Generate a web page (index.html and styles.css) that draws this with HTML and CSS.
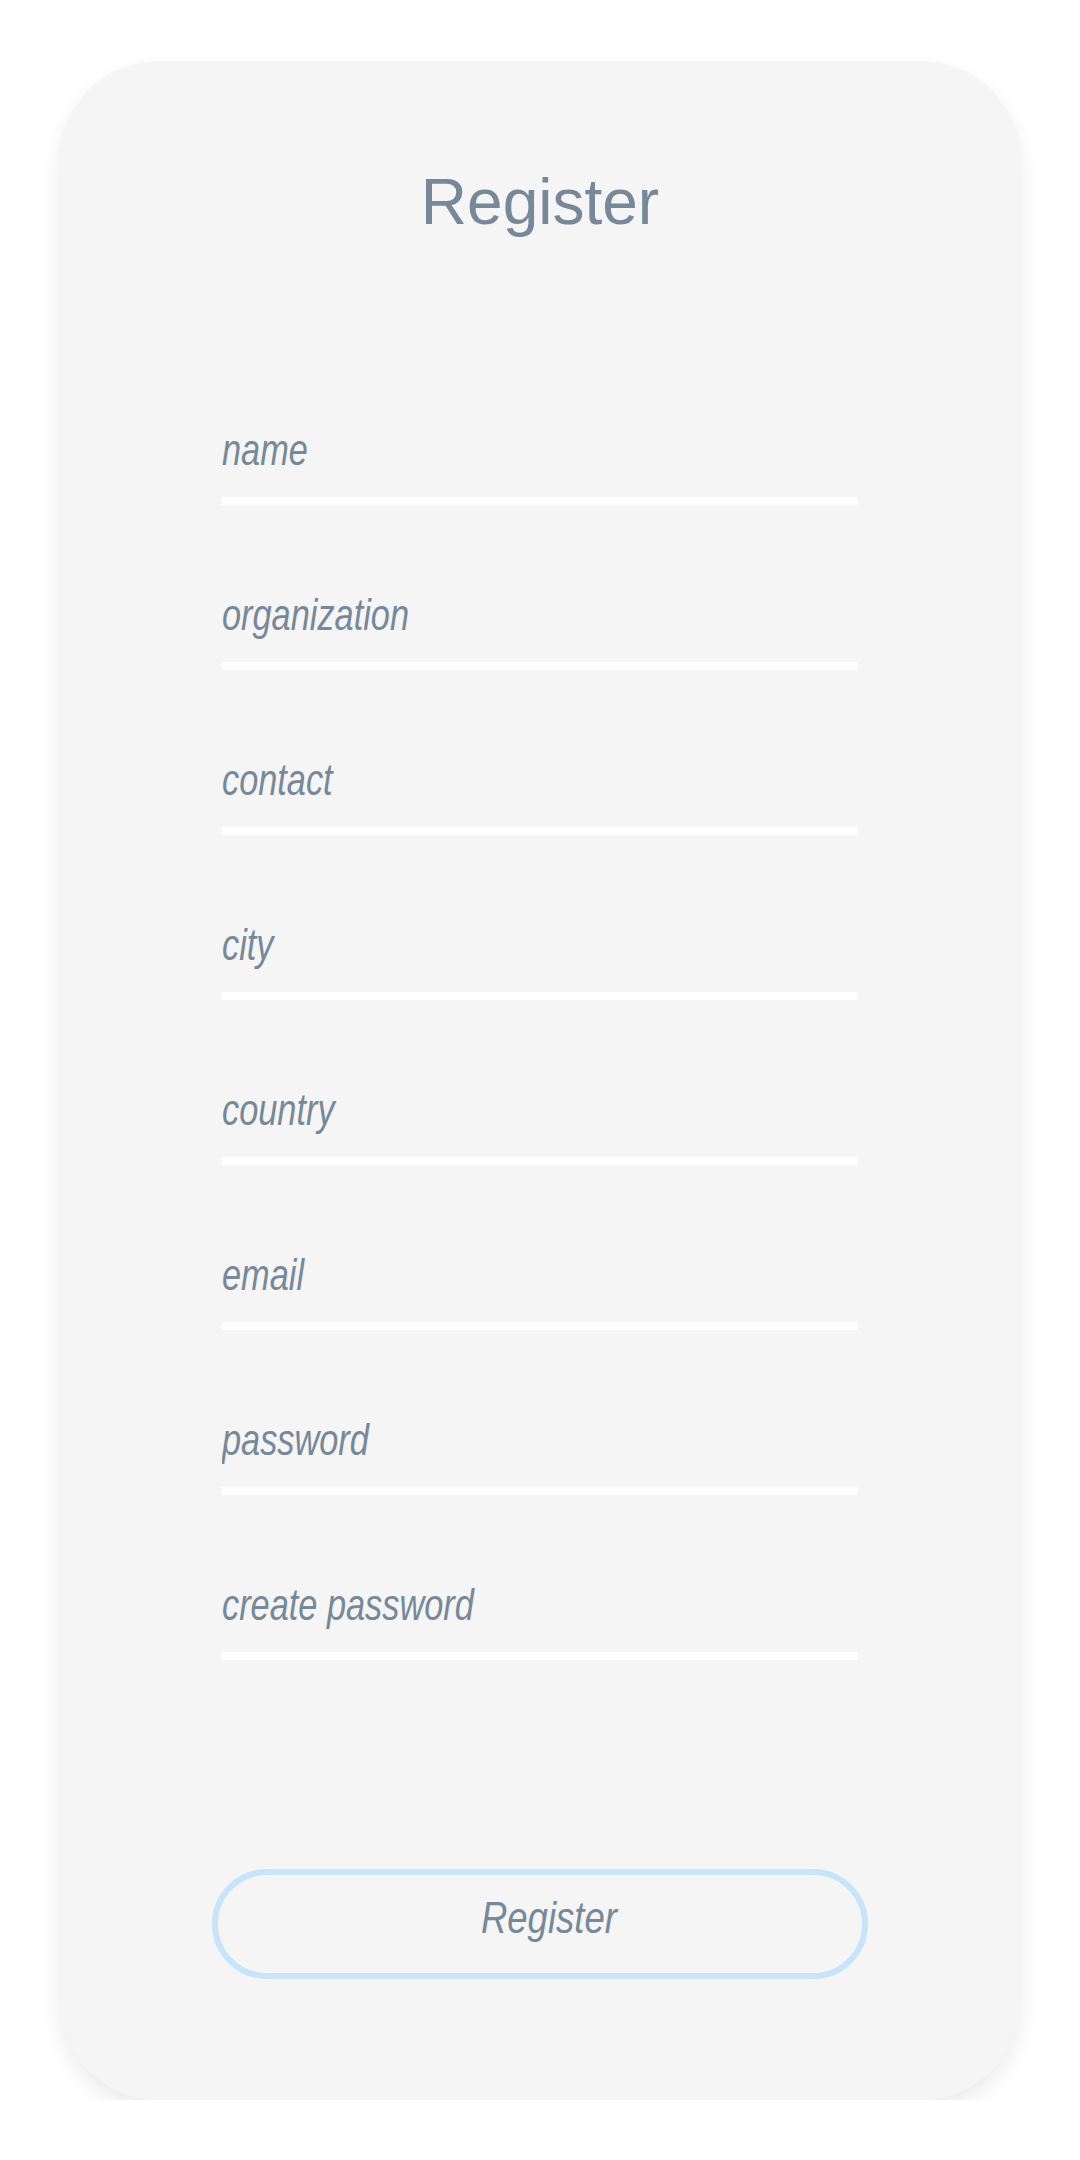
FILE: index.html
```html
<!DOCTYPE html>
<html lang="en">
<head>
<meta charset="utf-8">
<title>Register</title>
<link rel="stylesheet" href="styles.css">
</head>
<body>
<div class="card">
  <h1 class="title">Register</h1>
  <form class="form">
    <div class="fields">
      <input class="field" type="text" placeholder="name">
      <input class="field" type="text" placeholder="organization">
      <input class="field" type="text" placeholder="contact">
      <input class="field" type="text" placeholder="city">
      <input class="field" type="text" placeholder="country">
      <input class="field" type="email" placeholder="email">
      <input class="field" type="password" placeholder="password">
      <input class="field" type="password" placeholder="create password">
    </div>
    <button class="submit" type="button"><span class="submit-label">Register</span></button>
  </form>
</div>
</body>
</html>
```

FILE: styles.css
```css
html, body {
  margin: 0;
  padding: 0;
  background: #ffffff;
}

body {
  padding-top: 61px;
  font-family: "Liberation Sans", Arial, sans-serif;
}

.card {
  box-sizing: border-box;
  width: 962px;
  margin: 0 auto;
  padding: 105px 0 121px;
  background: #f5f5f5;
  border-radius: 100px;
  box-shadow: 0 10px 20px rgba(0, 0, 0, 0.08);
  display: flex;
  flex-direction: column;
  align-items: center;
}

.title {
  margin: 0;
  font-family: "Liberation Sans", Arial, sans-serif;
  font-weight: normal;
  font-size: 64px;
  line-height: 72px;
  color: #778899;
  text-align: center;
}

.form {
  margin-top: 186.5px;
  display: flex;
  flex-direction: column;
  align-items: center;
}

.fields {
  width: 636px;
  display: flex;
  flex-direction: column;
  align-items: flex-start;
  gap: 85px;
}

/* condensed italic look: the input is laid out wider and squeezed horizontally */
.field {
  display: block;
  flex: none;
  width: 815.4px;
  height: 50px;
  box-sizing: content-box;
  margin: 0;
  padding: 0 0 22px 0;
  border: none;
  border-bottom: 8px solid #ffffff;
  background: transparent;
  outline: none;
  font-family: "Liberation Sans", Arial, sans-serif;
  font-style: italic;
  font-size: 44px;
  color: #778899;
  transform: scaleX(0.78);
  transform-origin: left center;
}

.field::placeholder {
  color: #778899;
  opacity: 1;
}

.submit {
  margin-top: 209.5px;
  box-sizing: border-box;
  width: 656px;
  height: 110px;
  padding: 0 0 12px 18px;
  border: 6px solid #c8e4f8;
  border-radius: 55px;
  background: transparent;
  font-family: "Liberation Sans", Arial, sans-serif;
  font-style: italic;
  font-size: 44px;
  color: #778899;
  cursor: pointer;
}

.submit-label {
  display: inline-block;
  transform: scaleX(0.83);
}
```
